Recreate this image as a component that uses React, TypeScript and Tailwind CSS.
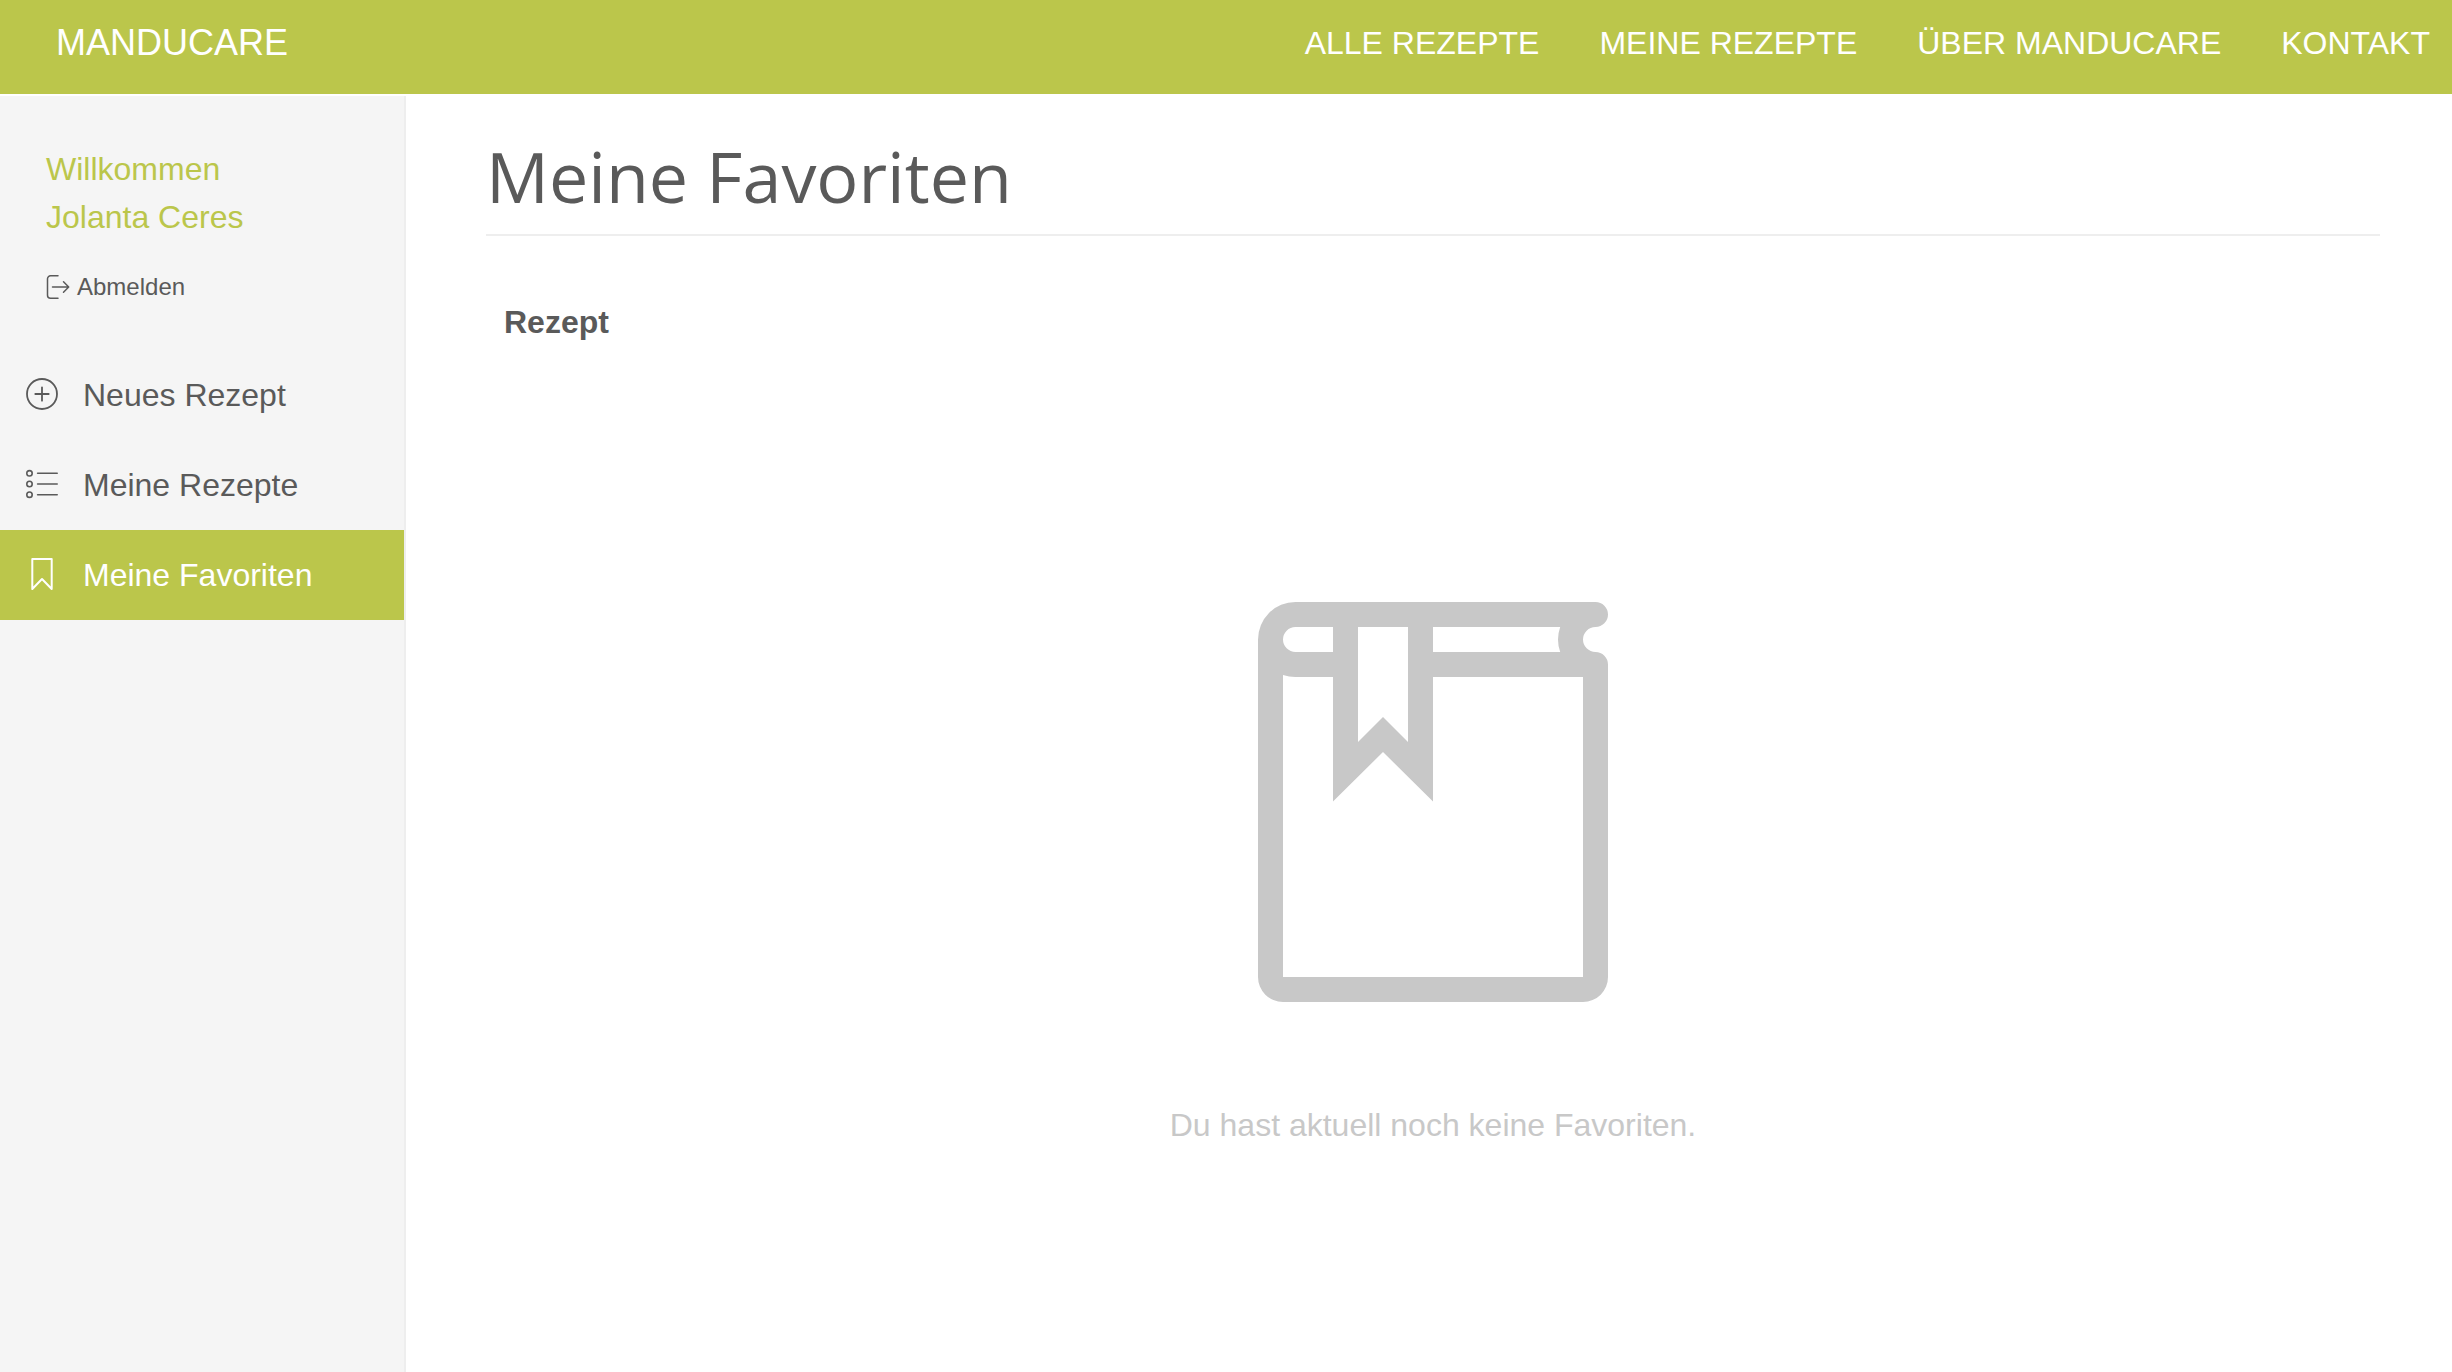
import React from "react";

const navLinks = ["Alle Rezepte", "Meine Rezepte", "Über Manducare", "Kontakt"];

function LogoutIcon() {
  return (
    <svg width="24" height="24" viewBox="0 0 24 24" fill="none" stroke="currentColor" strokeWidth="1.5" strokeLinecap="round" strokeLinejoin="round" aria-hidden="true">
      <path d="M12 .8H4.5A3 3 0 0 0 1.5 3.8v16.400a3 3 0 0 0 3 3H12M6.500 12h16M17.500 6.800l5.200 5.200-5.200 5.200" />
    </svg>
  );
}

function PlusIcon() {
  return (
    <svg className="mb-0.5" width="32" height="32" viewBox="0 0 32 32" fill="none" stroke="currentColor" strokeWidth="1.8" strokeLinecap="round" aria-hidden="true">
      <circle cx="16" cy="16" r="15" />
      <path d="M9.300 16h13.400M16 9.300v13.400" />
    </svg>
  );
}

function ListIcon() {
  return (
    <svg className="mb-0.5" width="32" height="32" viewBox="0 0 32 32" fill="none" stroke="currentColor" strokeWidth="1.600" strokeLinecap="round" aria-hidden="true">
      <circle cx="3.500" cy="5.300" r="2.700" />
      <circle cx="3.500" cy="16" r="2.700" />
      <circle cx="3.500" cy="26.700" r="2.700" />
      <path d="M11.600 5.300h19.600M11.600 16h19.600M11.600 26.700h19.600" />
    </svg>
  );
}

function BookmarkIcon() {
  return (
    <svg className="mb-0.5" width="32" height="32" viewBox="0 0 32 32" fill="none" stroke="currentColor" strokeWidth="2" strokeLinejoin="round" aria-hidden="true">
      <path d="M6.300 1h19.400v30L16 21 6.300 31z" />
    </svg>
  );
}

function BookIcon() {
  return (
    <svg width="350" height="400" viewBox="0 0 350 400" fill="currentColor" fillRule="evenodd" aria-hidden="true">
      <path d="M37.500 0H337.500A12.500 12.500 0 0 1 337.500 25A12.500 12.500 0 0 0 337.500 50A12.500 12.500 0 0 1 350 62.500V375A25 25 0 0 1 325 400H25A25 25 0 0 1 0 375V37.500A37.500 37.500 0 0 1 37.500 0Z M75 25H37.500A12.500 12.500 0 0 0 37.500 50H75Z M100 25V140L125 115L150 140V25Z M175 25V50H302.200A37.500 37.500 0 0 1 302.200 25Z M25 72.900V375H325V75H175V199.500L125 150L75 199.500V75H37.500A37.500 37.500 0 0 1 25 72.900Z" />
    </svg>
  );
}

const menu = [
  { label: "Neues Rezept", Icon: PlusIcon, active: false },
  { label: "Meine Rezepte", Icon: ListIcon, active: false },
  { label: "Meine Favoriten", Icon: BookmarkIcon, active: true },
];

export default function App() {
  return (
    <div className="flex min-h-screen flex-col bg-white font-['Liberation_Sans',Arial,sans-serif] text-[32px] leading-12 text-[#5a5a5a]">
      <header className="flex h-[94px] items-center justify-between bg-[#bbc64b] pr-[22px] pb-2 pl-14 text-white">
        <a href="#" className="text-4xl uppercase">Manducare</a>
        <nav className="flex gap-[60px]">
          {navLinks.map((label) => (
            <a key={label} href="#" className="uppercase">{label}</a>
          ))}
        </nav>
      </header>
      <div className="mt-0.5 flex flex-1">
        <aside className="w-[406px] shrink-0 border-r-2 border-[#eeeeee] bg-[#f5f5f5] pt-[49px]">
          <div className="px-[46px] text-[#bbc64b]">
            <p>Willkommen</p>
            <p>Jolanta Ceres</p>
          </div>
          <a href="#" className="mx-[46px] mt-7 flex items-center gap-[7px] text-2xl leading-9">
            <LogoutIcon />
            Abmelden
          </a>
          <ul className="mt-[45px]">
            {menu.map(({ label, Icon, active }) => (
              <li key={label}>
                <a
                  href="#"
                  aria-current={active ? "page" : undefined}
                  className={active ? "flex h-[90px] items-center gap-[25px] bg-[#bbc64b] pl-[26px] text-white" : "flex h-[90px] items-center gap-[25px] pl-[26px]"}
                >
                  <Icon />
                  {label}
                </a>
              </li>
            ))}
          </ul>
        </aside>
        <main className="min-w-0 flex-1 pt-10 pr-[72px] pl-20">
          <h1 className="border-b-2 border-[#eeeeee] pb-[18px] font-['Open_Sans',sans-serif] text-[70px] leading-20">Meine Favoriten</h1>
          <table className="mt-[62px] w-full text-left">
            <thead>
              <tr>
                <th scope="col" className="px-[18px] font-bold">Rezept</th>
              </tr>
            </thead>
          </table>
          <div className="mt-64 flex flex-col items-center gap-[99px] text-[#c8c8c8]">
            <BookIcon />
            <p>Du hast aktuell noch keine Favoriten.</p>
          </div>
        </main>
      </div>
    </div>
  );
}
